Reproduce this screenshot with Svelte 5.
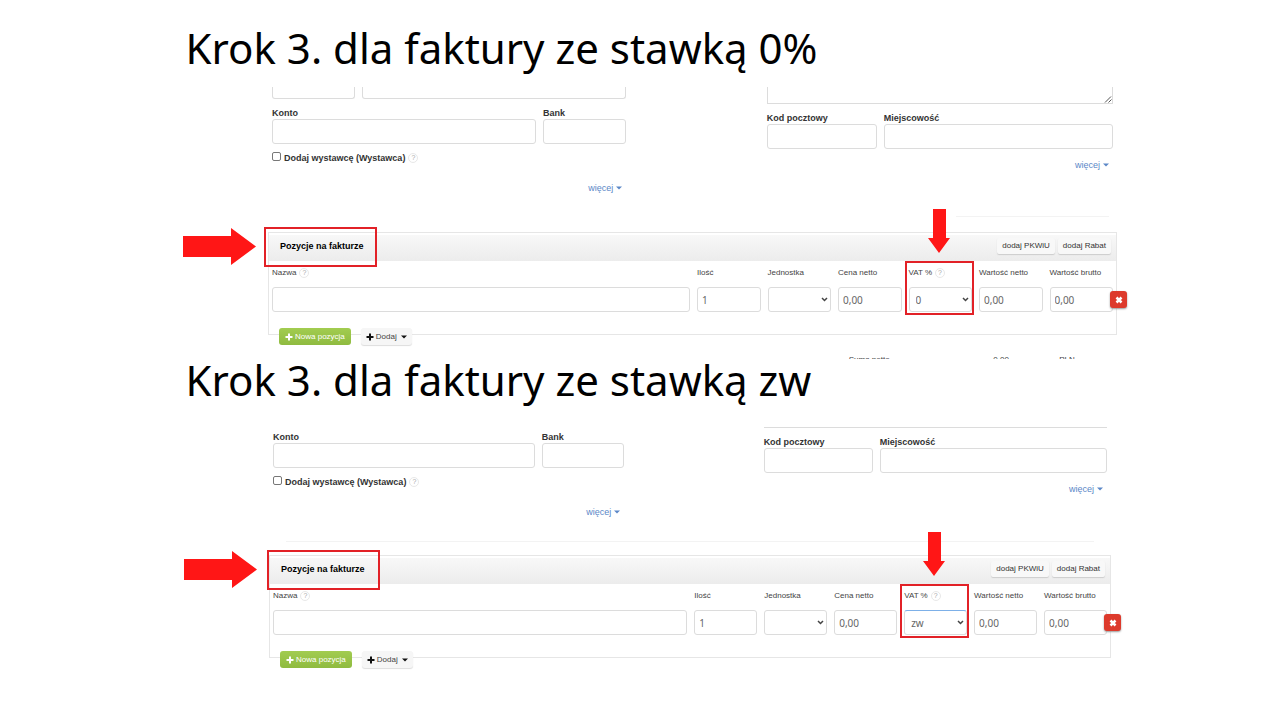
<script>
  const steps = [
    { id: 'zero', title: 'Krok 3. dla faktury ze stawką 0%', vat: '0' },
    { id: 'exempt', title: 'Krok 3. dla faktury ze stawką zw', vat: 'zw' }
  ];
  const amounts = { quantity: '1', price: '0,00' };
</script>

{#snippet caret()}
  <svg class="caret" viewBox="0 0 6 4" aria-hidden="true"><path d="M0 0.5h6L3 3.5z" /></svg>
{/snippet}

{#snippet plus()}
  <svg class="plus" viewBox="0 0 8 8" aria-hidden="true"><path d="M3 0.5h2V3h2.5v2H5v2.5H3V5H0.5V3H3z" /></svg>
{/snippet}

{#snippet arrow(kind)}
  {#if kind === 'right'}
    <svg class="arrow-right" viewBox="0 0 73 37" aria-hidden="true"><path d="M0 8h48V0l25 18.5L48 37v-8H0z" /></svg>
  {:else}
    <svg class="arrow-down" viewBox="0 0 22 44" aria-hidden="true"><path d="M5 0h13v29h4L11 44 0 29h5z" /></svg>
  {/if}
{/snippet}

{#snippet field(id, label, value)}
  <div class="field">
    <label for={id}>{label}</label>
    <input {id} type="text" {value} />
  </div>
{/snippet}

<main>
  {#each steps as step}
    <section class="step {step.id}">
      <h1>{step.title}</h1>
      <div class="sheet">
        <div class="form">
          <div class="left">
            {#if step.id === 'zero'}
              <div class="stubs"><span></span><span></span></div>
            {/if}
            <div class="account">
              {@render field(`${step.id}-account`, 'Konto', '')}
              {@render field(`${step.id}-bank`, 'Bank', '')}
            </div>
            <div class="check">
              <input id="{step.id}-issuer" type="checkbox" />
              <label for="{step.id}-issuer">Dodaj wystawcę (Wystawca)</label>
              <span class="help">?</span>
            </div>
            <a class="more" href="#more">więcej {@render caret()}</a>
          </div>
          <div class="right">
            <div class="address">
              {#if step.id === 'zero'}
                <svg viewBox="0 0 8 8" aria-hidden="true"><path d="M1 7.5L7 1.5M4.5 7.5L7.5 4.5" /></svg>
              {/if}
            </div>
            <div class="city">
              {@render field(`${step.id}-zip`, 'Kod pocztowy', '')}
              {@render field(`${step.id}-city`, 'Miejscowość', '')}
            </div>
            <a class="more" href="#more">więcej {@render caret()}</a>
          </div>
        </div>

        <div class="rule"></div>

        <div class="items">
          <header>
            <h2>Pozycje na fakturze</h2>
            <div class="tools">
              <button type="button">dodaj PKWiU</button>
              <button type="button">dodaj Rabat</button>
            </div>
            <div class="mark title-mark">{@render arrow('right')}</div>
          </header>
          <div class="row">
            <div class="field">
              <span class="caption"><label for="{step.id}-name">Nazwa</label><span class="help">?</span></span>
              <input id="{step.id}-name" type="text" />
            </div>
            {@render field(`${step.id}-qty`, 'Ilość', amounts.quantity)}
            <div class="field pick">
              <label for="{step.id}-unit">Jednostka</label>
              <select id="{step.id}-unit"><option></option></select>
              <svg class="chevron" viewBox="0 0 7 5" aria-hidden="true"><path d="M1 1l2.5 2.5L6 1" /></svg>
            </div>
            {@render field(`${step.id}-price`, 'Cena netto', amounts.price)}
            <div class="field pick vat">
              <span class="caption"><label for="{step.id}-vat">VAT %</label><span class="help">?</span></span>
              <select id="{step.id}-vat"><option>{step.vat}</option></select>
              <svg class="chevron" viewBox="0 0 7 5" aria-hidden="true"><path d="M1 1l2.5 2.5L6 1" /></svg>
              <div class="mark vat-mark">{@render arrow('down')}</div>
            </div>
            {@render field(`${step.id}-net`, 'Wartość netto', amounts.price)}
            {@render field(`${step.id}-gross`, 'Wartość brutto', amounts.price)}
            <button class="remove" type="button" aria-label="Usuń">
              <svg viewBox="0 0 8 8" aria-hidden="true"><path d="M1.5 1.5l5 5M6.5 1.5l-5 5" /></svg>
            </button>
          </div>
          <div class="actions">
            <button class="new" type="button">{@render plus()}Nowa pozycja</button>
            <button class="add" type="button">{@render plus()}Dodaj {@render caret()}</button>
          </div>
        </div>
        {#if step.id === 'zero'}
          <div class="totals"><span>Suma netto</span><span>0,00</span><span>PLN</span></div>
        {/if}
      </div>
    </section>
  {/each}
</main>

<style>
  :global(body) { background: #fff; }
  main, main :global(*) { box-sizing: border-box; }
  main {
    padding-bottom: 24px;
    font: 9px/12px "Liberation Sans", Arial, sans-serif;
    color: #444;
  }
  .step { display: grid; align-content: start; }
  .zero { grid-template-columns: 268fr 849fr 163fr; }
  .exempt { grid-template-columns: 269fr 842fr 169fr; }
  h1 {
    grid-column: 1 / -1;
    margin: 0;
    padding: 18px 0 9px 14.5%;
    font: 400 42px/60px "Noto Sans", "Open Sans", sans-serif;
    color: #000;
  }
  .exempt h1 { padding-top: 0; padding-bottom: 8px; margin-top: -9px; }
  .sheet { grid-column: 2; min-width: 0; }
  .form { display: grid; padding: 0 4px; column-gap: 16.7%; }
  .zero .form { grid-template-columns: 354fr 346fr; }
  .exempt .form { grid-template-columns: 351fr 343fr; }

  input, select, button { font: inherit; color: inherit; margin: 0; }
  input[type='text'], select {
    display: block;
    width: 100%;
    min-width: 0;
    height: 25px;
    padding: 0 4px;
    border: 1px solid #dcdcdc;
    border-radius: 3px;
    background: #fff;
    outline: 0;
  }
  .field { min-width: 0; position: relative; }
  .field > label { display: block; white-space: nowrap; }
  .form label { font-weight: 700; color: #333; }
  .account, .city, .stubs { display: grid; gap: 7px; }
  .account { grid-template-columns: 263fr 83fr; }
  .city { grid-template-columns: 110fr 229fr; }
  .stubs { grid-template-columns: 83fr 263fr; margin-bottom: 8px; }
  .stubs span { height: 12px; border: 1px solid #dcdcdc; border-top: 0; border-radius: 0 0 3px 3px; }
  .left, .right { display: flex; flex-direction: column; }
  .exempt .left { padding-top: 13px; }
  .address { height: 17px; margin-bottom: 8px; border: 1px solid #dcdcdc; border-top: 0; display: flex; justify-content: flex-end; align-items: flex-end; }
  .address svg { width: 8px; height: 8px; fill: none; stroke: #555; }
  .exempt .address { height: 10px; border-width: 0 0 1px; }
  .check { display: flex; align-items: center; gap: 3px; margin-top: 8px; }
  .check input {
    appearance: none;
    width: 9px;
    height: 9px;
    margin-bottom: 3px;
    border: 1px solid #777;
    border-radius: 2px;
    background: #fff;
  }
  .help {
    width: 10px;
    height: 10px;
    border: 1px solid #e8e8e8;
    border-radius: 50%;
    font-size: 7px;
    line-height: 8px;
    text-align: center;
    color: #aaa;
  }
  .more {
    display: flex;
    align-items: center;
    align-self: flex-end;
    gap: 3px;
    margin: 10px 4px 0 0;
    color: #5b87c7;
    text-decoration: none;
  }
  .left .more { margin-top: 18px; }
  .caret { width: 6px; height: 4px; fill: currentColor; }
  .rule { height: 1px; margin: 22px 1% 15px 81%; background: #f3f3f3; }
  .exempt .rule { margin: 23px 2% 13px 2%; }

  .items { border: 1px solid #e6e6e6; height: 103px; position: relative; }
  header {
    position: relative;
    display: flex;
    align-items: center;
    justify-content: space-between;
    height: 26px;
    margin-top: 2px;
    padding: 0 5px 4px 11px;
    background: linear-gradient(#f8f8f8, #ececec);
  }
  h2 { margin: 0; font-size: 9px; line-height: 12px; color: #000; }
  .tools { display: flex; gap: 3px; }
  .tools button {
    height: 16px;
    padding: 0 5px;
    border: 0;
    border-radius: 2px;
    background: #f8f8f8;
    box-shadow: 0 1px 1px #ccc;
    color: #333;
    font-size: 8px;
  }
  .mark { position: absolute; border: 2px solid #e22127; pointer-events: none; }
  .title-mark { left: -5px; top: -8px; width: 113px; height: 40px; }
  .exempt .title-mark { left: -3px; }
  .vat-mark { inset: -6px -2px -3px -4px; }
  .mark svg { position: absolute; fill: #ff1616; }
  .arrow-right { right: calc(100% + 10px); top: -1px; width: 73px; height: 37px; }
  .exempt .arrow-right { right: calc(100% + 12px); }
  .arrow-down { left: 21px; bottom: calc(100% + 10px); width: 22px; height: 44px; }
  .row {
    position: relative;
    display: grid;
    grid-template-columns: 836fr repeat(6, 127fr);
    gap: 7px;
    padding: 6px 3px 0;
    font-size: 8px;
  }
  .row .field { display: grid; gap: 8px; }
  .caption { display: flex; align-items: center; gap: 3px; height: 12px; white-space: nowrap; }
  .row .field input, .row .field select { color: #666; font: 10px/12px "Noto Sans", "Open Sans", sans-serif; }
  .row .field select { appearance: none; padding: 0 6px; }
  .exempt .row .vat select { border-top-color: #7db0e8; }
  .chevron { position: absolute; right: 3px; bottom: 10px; width: 7px; height: 5px; fill: none; stroke: #444; stroke-width: 1.5; }
  .remove {
    position: absolute;
    right: -11px;
    bottom: 4px;
    display: grid;
    place-items: center;
    width: 17px;
    height: 17px;
    padding: 0;
    border: 0;
    border-radius: 3px;
    background: #dd3a2c;
    box-shadow: 0 1px 2px #999;
  }
  .remove svg { width: 8px; height: 8px; stroke: #fff; stroke-width: 2.5; }
  .actions { position: absolute; left: 10px; bottom: -11px; display: flex; gap: 10px; }
  .actions button {
    display: flex;
    align-items: center;
    gap: 2px;
    height: 17px;
    padding: 0 6px;
    border: 0;
    border-radius: 3px;
    font-size: 8px;
    white-space: nowrap;
  }
  .plus { width: 8px; height: 8px; fill: currentColor; }
  .actions .new { background: linear-gradient(#a2cc50, #8fbb40); color: #fff; }
  .actions .add { padding: 0 5px; background: #f6f6f6; box-shadow: 0 1px 1px #ddd; }
  .add svg { fill: #111; }
  .add .caret { margin-left: 2px; }
  .totals {
    display: grid;
    grid-template-columns: 145fr 66fr 58fr;
    height: 3px;
    margin-top: 21px;
    padding-left: 68.4%;
    overflow: hidden;
    font-size: 8px;
    line-height: 8px;
  }
</style>
